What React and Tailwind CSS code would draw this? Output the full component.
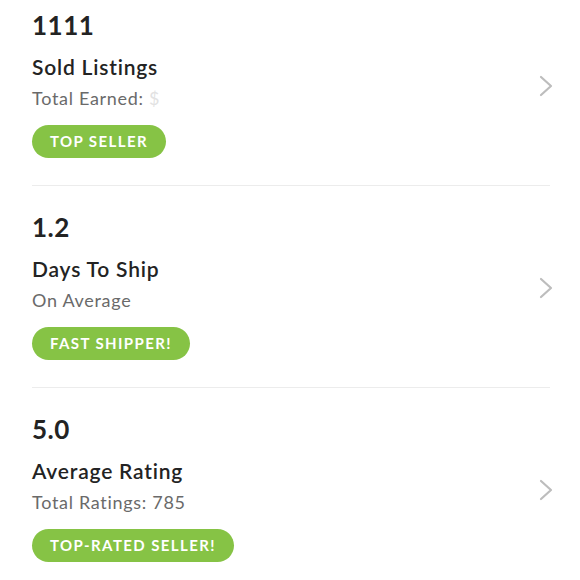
const stats = [
  { value: '1111', title: 'Sold Listings', sub: 'Total Earned:', faint: '$', badge: 'TOP SELLER' },
  { value: '1.2', title: 'Days To Ship', sub: 'On Average', badge: 'FAST SHIPPER!' },
  { value: '5.0', title: 'Average Rating', sub: 'Total Ratings: 785', badge: 'TOP-RATED SELLER!' },
]

function Chevron() {
  return (
    <svg width="14" height="22" viewBox="0 0 14 22" fill="none" className="-mr-[3px] mt-[5px] shrink-0">
      <polyline points="2,2 12,11 2,20" stroke="#bdbdbd" strokeWidth="2.2" strokeLinecap="round" strokeLinejoin="round" />
    </svg>
  )
}

export default function App() {
  return (
    <div className="w-[580px] h-[580px] bg-white overflow-hidden pl-8 pr-[30px]" style={{ fontFamily: 'Lato, "Open Sans", sans-serif' }}>
      {stats.map((s, i) => (
        <div
          key={s.value}
          className={`flex items-center justify-between pb-[27px] ${i === 0 ? 'pt-[9px]' : 'pt-[25px] border-t border-[#ececec]'}`}
        >
          <div className="flex flex-col">
            <div className="text-[26px] leading-[32px] font-bold text-[#232323] tracking-[0.5px]">{s.value}</div>
            <div className="mt-[13px] text-[21px] leading-[25px] font-semibold text-[#232323] tracking-[0.8px]">{s.title}</div>
            <div className="mt-[8px] text-[18px] leading-[22px] text-[#6a6a6a] tracking-[0.7px]">
              {s.sub}
              {s.faint && <span className="text-[#e2e2e2]"> {s.faint}</span>}
            </div>
            <div className="mt-[16px] self-start h-[33px] px-[18px] rounded-full bg-[#86c345] text-white text-[15px] font-bold tracking-[1.4px] flex items-center">
              {s.badge}
            </div>
          </div>
          <Chevron />
        </div>
      ))}
    </div>
  )
}
